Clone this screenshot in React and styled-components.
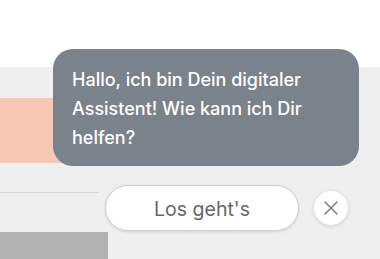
import React from 'react';
import styled, { createGlobalStyle } from 'styled-components';

const Global = createGlobalStyle`
  html, body {
    margin: 0;
    padding: 0;
  }
  body {
    font-family: Inter, "Noto Sans", sans-serif;
  }
`;

const Page = styled.div`
  position: relative;
  width: 380px;
  height: 259px;
  overflow: hidden;
  background: #ffffff;
  display: flex;
  flex-direction: column;
`;

const Header = styled.div`
  height: 67px;
  background: #ffffff;
  flex-shrink: 0;
`;

const Section = styled.div`
  flex: 1;
  background: #efefef;
  padding-top: 31px;
  display: flex;
  flex-direction: column;
`;

const Banner = styled.div`
  width: 220px;
  height: 65px;
  background: #f7c9b4;
`;

const Divider = styled.div`
  width: 99px;
  height: 1px;
  background: #d6d6d6;
  margin-top: 29px;
`;

const Block = styled.div`
  width: 108px;
  flex: 1;
  background: #b2b2b2;
  margin-top: 39px;
`;

const Widget = styled.div`
  position: absolute;
  top: 49px;
  right: 21px;
  width: 306px;
  display: flex;
  flex-direction: column;
  align-items: flex-end;
`;

const Bubble = styled.div`
  box-sizing: border-box;
  width: 100%;
  height: 117px;
  background: #7a828b;
  border-radius: 20px;
  color: #ffffff;
  font-size: 18px;
  font-weight: 500;
  line-height: 29px;
  padding: 16px 19px 0;
`;

const Actions = styled.div`
  display: flex;
  align-items: center;
  gap: 15px;
  margin-top: 19px;
  margin-right: 11px;
`;

const StartButton = styled.button`
  box-sizing: border-box;
  width: 194px;
  height: 46px;
  border-radius: 23px;
  background: #ffffff;
  border: 1.5px solid #cfcfcf;
  box-shadow: 0 1px 3px rgba(0, 0, 0, 0.12);
  font-family: Inter, "Noto Sans", sans-serif;
  font-size: 19.5px;
  color: #666666;
  padding: 2px 0 0;
`;

const CloseButton = styled.button`
  width: 34px;
  height: 34px;
  border-radius: 50%;
  border: none;
  background: #ffffff;
  box-shadow: 0 1px 4px rgba(0, 0, 0, 0.15);
  display: flex;
  align-items: center;
  justify-content: center;
  padding: 0;
`;

export default function App() {
  return (
    <>
      <Global />
      <Page>
        <Header />
        <Section>
          <Banner />
          <Divider />
          <Block />
        </Section>
        <Widget>
          <Bubble>Hallo, ich bin Dein digitaler Assistent! Wie kann ich Dir helfen?</Bubble>
          <Actions>
            <StartButton>Los geht's</StartButton>
            <CloseButton>
              <svg width="16" height="16" viewBox="0 0 16 16">
                <path d="M2 2 L14 14 M14 2 L2 14" stroke="#737373" strokeWidth="1.4" strokeLinecap="round" />
              </svg>
            </CloseButton>
          </Actions>
        </Widget>
      </Page>
    </>
  );
}
